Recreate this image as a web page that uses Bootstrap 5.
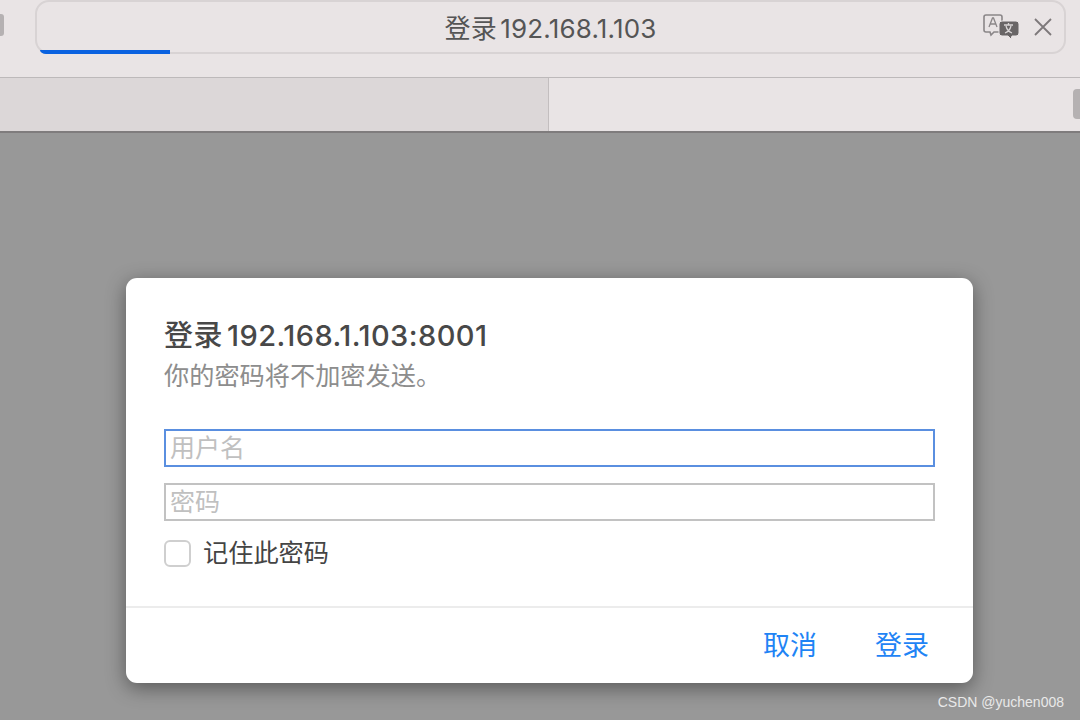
<!DOCTYPE html>
<html lang="zh-CN">
<head>
<meta charset="utf-8">
<title>登录</title>
<link href="https://cdn.jsdelivr.net/npm/bootstrap@5.3.0/dist/css/bootstrap.min.css" rel="stylesheet">
<style>
html,body{height:720px;overflow:hidden}
body{background:#989898;font-family:"Inter","Noto Sans CJK SC",sans-serif;position:relative}
.tool-row{height:78px;background:#e9e4e5;border-bottom:1px solid #bdb9ba;align-items:flex-start}
.edge-btn{width:4px;height:22px;margin-top:14px;background:#b5b1b2;border-radius:0 3px 3px 0;flex:none}
.url-bar{width:1031px;height:54px;margin-left:31px;border:2px solid #d8d3d4;border-radius:14px;position:relative;font-size:26px;color:#555}
.url-label{margin-top:2px;letter-spacing:.15px;word-spacing:-4px}
.url-prog{position:absolute;left:3px;bottom:-2px;width:130px;height:4px;background:#0a62e0;border-bottom-left-radius:6px 4px}
.url-icons{position:absolute;right:12px;top:12px;gap:15px}
.tab-row{height:55px;background:#e9e4e5;border-bottom:2px solid #7f7c7d}
.tab-off{width:549px;background:#dcd7d8;border-right:1px solid #c3bebf}
.edge-right{width:7px;height:30px;margin-top:11px;background:#b5b1b2;border-radius:4px 0 0 4px}
.stage{padding:145px 0 0 126px}
.sheet{width:847px;height:405px;background:#fff;border-radius:11px;box-shadow:0 5px 20px rgba(0,0,0,.42)}
.sheet-main{padding:39px 38px 0;height:328px}
.sheet-title{font-size:29px;line-height:38px;font-weight:500;color:#484848;letter-spacing:.45px;word-spacing:-4px;white-space:nowrap}
.sheet-sub{font-size:25.2px;line-height:28px;color:#8d8d8d;margin-top:7px;white-space:nowrap}
.fld{display:block;width:100%;height:38px;border:2px solid #c2c2c2;padding:0 4px;font-size:25px;line-height:32px;outline:0;background:#fff;border-radius:0;font-family:inherit}
.fld::placeholder{color:#c0c0c0}
.fld-on{border-color:#5a8fe0;margin-top:39px;margin-bottom:16px}
.chk-row{margin-top:17px;gap:12px;font-size:25.2px;line-height:30px;color:#444}
.chk-box{width:27px;height:27px;border:2px solid #cfcfcf;border-radius:6px;background:#fff;margin:0;appearance:none;flex:none}
.sheet-foot{height:77px;border-top:2px solid #ececec;padding-right:44px;gap:58px}
.act{font-size:27px;line-height:36px;color:#1f84f5;padding:0;border:0;background:none;border-radius:0}
.mark-text{position:absolute;right:16px;bottom:9px;font-size:14px;line-height:17px;color:#e9e9e9;font-family:"Liberation Sans",sans-serif}
</style>
</head>
<body>
<div class="d-flex tool-row">
  <div class="edge-btn"></div>
  <div class="url-bar d-flex align-items-center justify-content-center">
    <span class="url-label">登录 192.168.1.103</span>
    <div class="url-prog"></div>
    <div class="url-icons d-flex align-items-center">
      <svg width="36" height="26" viewBox="0 0 36 26" fill="none">
        <path d="M3 1h14a2 2 0 0 1 2 2v13a2 2 0 0 1-2 2h-6l-3 3-1-3H3a2 2 0 0 1-2-2V3a2 2 0 0 1 2-2z" stroke="#8a8688" stroke-width="1.6"/>
        <path d="M6 13l3.500-9h1L14 13M7 10h6" stroke="#8a8688" stroke-width="1.3"/>
        <path d="M19 7h14a3 3 0 0 1 3 3v9a3 3 0 0 1-3 3h-4l-1 3-3-3h-6a3 3 0 0 1-3-3v-9a3 3 0 0 1 3-3z" fill="#696566" stroke="#e9e4e5"/>
        <path d="M21 11h9M25.500 9v2M23 12c1 4 3 6 6 7M28 12c-1 4-3 6-6 7" stroke="#d9d5d6" stroke-width="1.300"/>
      </svg>
      <svg width="18" height="18" viewBox="0 0 18 18" fill="none"><path d="M1 1l16 16M17 1L1 17" stroke="#7d797a" stroke-width="1.800"/></svg>
    </div>
  </div>
</div>
<div class="d-flex justify-content-between tab-row">
  <div class="tab-off"></div>
  <div class="edge-right"></div>
</div>
<div class="stage">
  <div class="sheet d-flex flex-column">
    <div class="sheet-main">
      <div class="sheet-title">登录 192.168.1.103:8001</div>
      <div class="sheet-sub">你的密码将不加密发送。</div>
      <input class="fld fld-on" type="text" placeholder="用户名">
      <input class="fld" type="password" placeholder="密码">
      <label class="d-flex align-items-center chk-row">
        <input class="chk-box" type="checkbox">
        <span>记住此密码</span>
      </label>
    </div>
    <div class="sheet-foot d-flex align-items-center justify-content-end">
      <button class="btn act" type="button">取消</button>
      <button class="btn act" type="button">登录</button>
    </div>
  </div>
</div>
<div class="mark-text">CSDN @yuchen008</div>
</body>
</html>
